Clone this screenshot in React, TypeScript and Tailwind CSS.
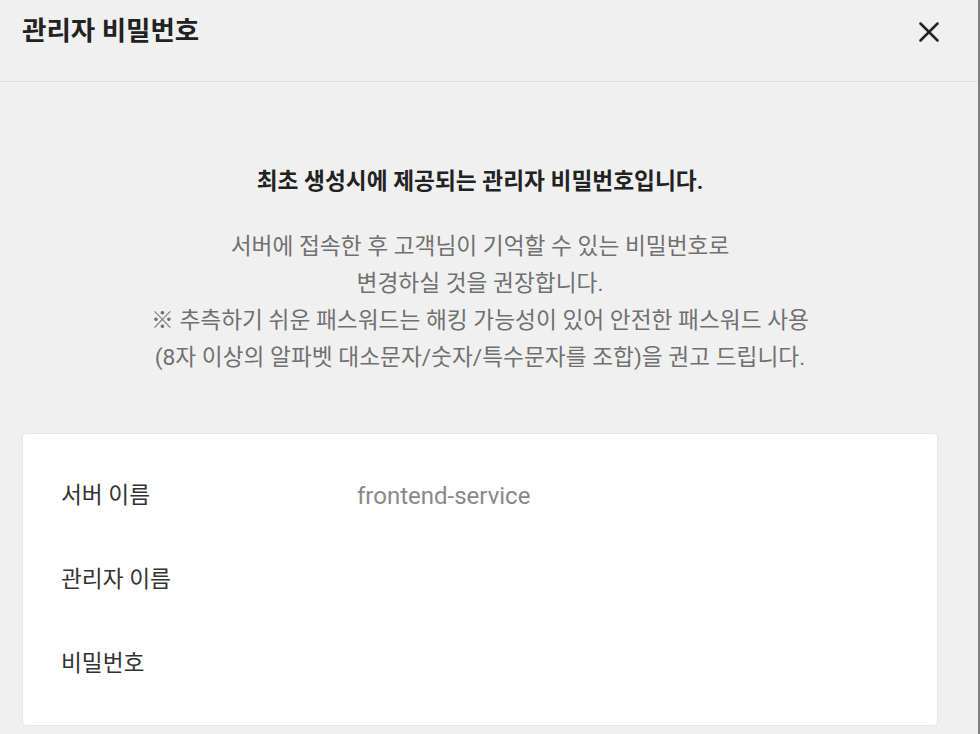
import { X } from "lucide-react";

const rows = [
  { label: "서버 이름", value: "frontend-service" },
  { label: "관리자 이름", value: "" },
  { label: "비밀번호", value: "" },
];

export default function App() {
  return (
    <div className="h-[734px] w-full overflow-hidden border-r-2 border-[#7f7f7f] bg-[#f0f0f0] font-['Roboto','Noto_Sans_CJK_KR',sans-serif]">
      {/* Header */}
      <div className="flex h-[82px] items-start justify-between border-b border-[#e0e0e0] pl-[22px] pr-[32px] pt-[11px]">
        <h1 className="h-[40px] text-[26.5px] font-bold leading-[40px] text-[#222]">관리자 비밀번호</h1>
        <button className="flex h-[42px] w-[34px] items-center justify-center text-[#222]">
          <X size={34} strokeWidth={1.8} />
        </button>
      </div>

      {/* Notice */}
      <div className="pl-[22px] pr-[40px]">
        <div className="pt-[82px] text-center">
          <p className="text-[22.7px] font-bold leading-[36px] text-[#222]">
            최초 생성시에 제공되는 관리자 비밀번호입니다.
          </p>
          <p className="mt-[28px] text-[22.7px] leading-[37px] text-[#707070]">
            서버에 접속한 후 고객님이 기억할 수 있는 비밀번호로
            <br />
            변경하실 것을 권장합니다.
            <br />
            ※ 추측하기 쉬운 패스워드는 해킹 가능성이 있어 안전한 패스워드 사용
            <br />
            (8자 이상의 알파벳 대소문자/숫자/특수문자를 조합)을 권고 드립니다.
          </p>
        </div>

        {/* Info card */}
        <div className="mt-[57px] rounded-[4px] border border-[#e6e6e6] bg-white px-[38px] pb-[19px] pt-[20px]">
          {rows.map((r) => (
            <div key={r.label} className="flex h-[84px] items-center">
              <span className="w-[296px] text-[22.7px] text-[#333]">{r.label}</span>
              <span className="text-[24px] text-[#888]">{r.value}</span>
            </div>
          ))}
        </div>
      </div>
    </div>
  );
}
